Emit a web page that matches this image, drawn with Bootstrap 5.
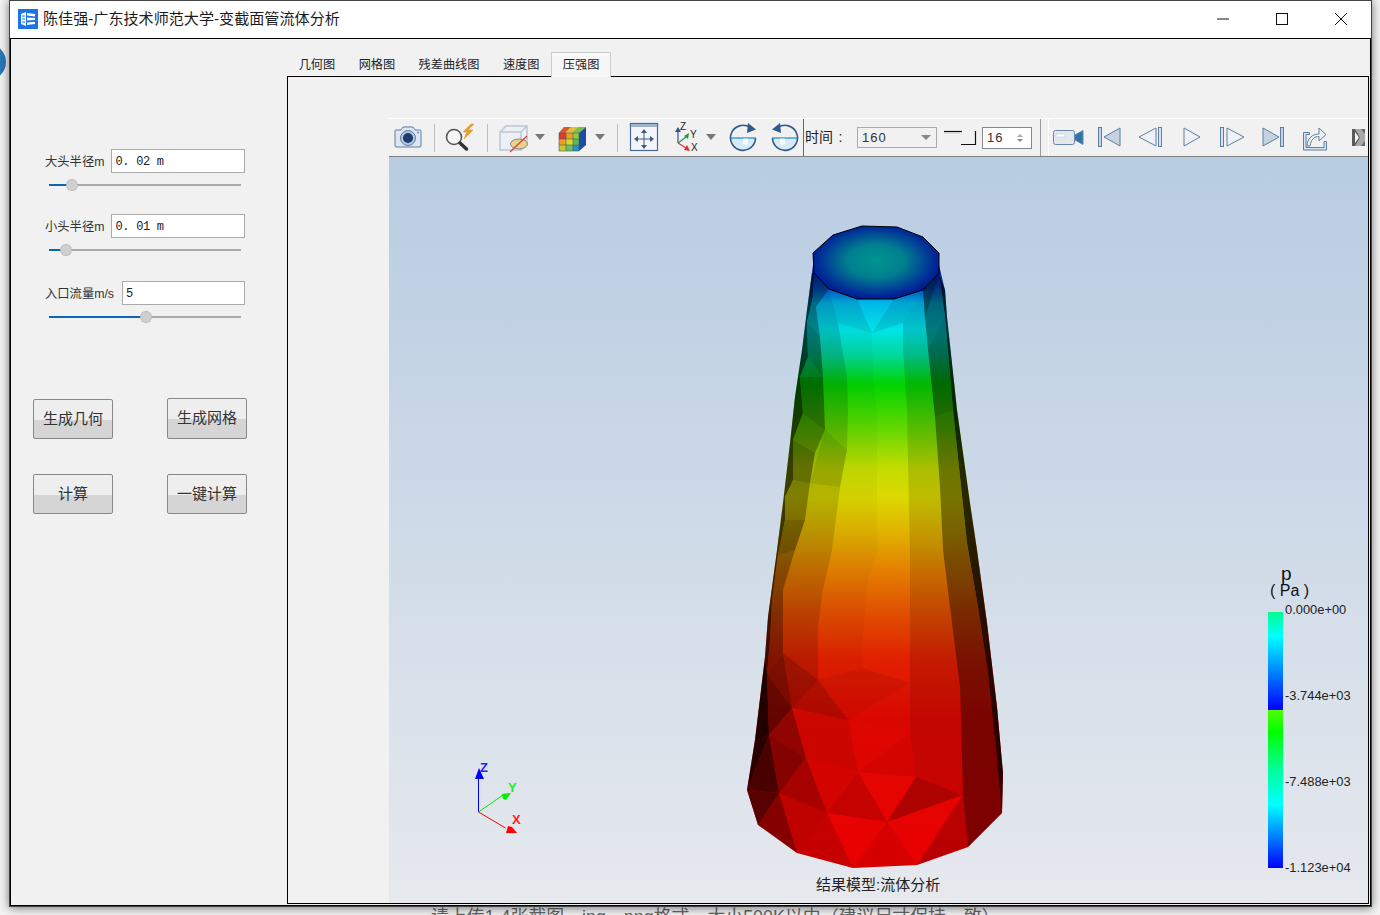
<!DOCTYPE html>
<html lang="zh-CN">
<head>
    <meta charset="UTF-8">
    <title>陈佳强-广东技术师范大学-变截面管流体分析</title>
    <meta name="viewport" content="width=device-width, initial-scale=1">
    <link href="https://cdn.jsdelivr.net/npm/bootstrap@5.3.0/dist/css/bootstrap.min.css" rel="stylesheet">
    <style>
        html, body { height: 915px; overflow: hidden; }
        body {
            background-color: #f3f3f3;
            font-family: "Liberation Sans", "Noto Sans CJK SC", sans-serif;
            color: #222;
        }
        /* page behind the window */
        .back-text {
            padding: 905px 0 0 431px;
            font-size: 17.9px;
            line-height: 24px;
            color: #666;
            white-space: nowrap;
        }
        .back-dot {
            position: absolute; left: -30px; top: 44px;
            width: 36px; height: 36px; border-radius: 50%;
            background: #2a78b8;
        }
        .win {
            position: absolute; left: 9px; top: 0;
            width: 1363px; height: 907px;
            border: 1px solid #444;
            background: #f1f1f1;
            box-shadow: 0 1px 9px rgba(0, 0, 0, .55);
        }
        .win-title { height: 38px; padding-bottom: 1px; background: #fff; border-bottom: 1px solid #000; }
        .win-name { font-size: 15.1px; color: #1c1c1c; margin-left: 5px; }
        .win-ctl { width: 59px; }
        .win-ctls { margin-right: 1px; }
        .win-body { height: 867px; border-left: 1px solid #000; border-right: 1px solid #000; border-bottom: 1px solid #000; }
        /* left panel */
        .side { width: 276px; padding: 110px 0 0 22px; }
        .fields { width: 212px; padding-left: 12px; }
        .field-row { gap: 7px; }
        .field-label { font-size: 12.3px; padding-top: 3px; color: #333; white-space: nowrap; }
        .field-wide { margin-left: 1px; }
        .field-input {
            height: 24px; padding: 2px 3px 0; border: 1px solid #aaa; border-radius: 0;
            font-family: "Liberation Mono", monospace; font-size: 12px; letter-spacing: -.3px; color: #222;
        }
        .field-gap1 { margin-bottom: 23px; }
        .field-gap2 { margin-bottom: 25px; }
        .slide {
            display: block; width: 192px; height: 12px; margin: 6px 0 0 4px; padding: 0;
        }
        .slide::-webkit-slider-runnable-track {
            height: 2px; border-radius: 0;
            background: linear-gradient(90deg, #0a66b8 var(--fill), #aaa var(--fill));
        }
        .slide::-webkit-slider-thumb {
            width: 12px; height: 12px; margin-top: -5px;
            background: #cfcfcf; border: 1px dotted #aaa; border-radius: 50%;
        }
        .btn-rows { width: 214px; }
        .btn-row1 { margin-top: 75px; }
        .btn-row2 { margin-top: 35px; }
        .win-btn {
            width: 80px; height: 40px; padding: 0;
            background: linear-gradient(#eeeeee 52%, #d5d5d5 52%);
            border: 1px solid #888; border-radius: 2px;
            font-size: 15px; color: #333;
        }
        .win-btn-tall { height: 41px; }
        /* tabs + frame */
        .main { padding-top: 13px; width: 1082px; }
        .main .nav-tabs { height: 24px; border-bottom: 0; }
        .main .nav-link {
            height: 25px; padding: 0 11.700px; margin: 0; border: 0; border-radius: 0;
            background: none; color: #222; font-size: 12.2px; line-height: 26px;
        }
        .main .nav-link.active {
            position: relative; z-index: 1; padding: 0 10.700px;
            background: #f7f7f7; border: 1px solid #ccc; border-bottom: 0; color: #222; line-height: 24px;
        }
        .frame { height: 828px; border: 1px solid #000; padding: 41px 0 0 101px; }
        .tools { height: 39px; border-top: 1px solid #fff; border-bottom: 1px solid #808080; padding-left: 5px; }
        .tools svg { display: block; flex: none; }
        .tool-sep { width: 1px; height: 28px; background: #bdbdbd; flex: none; }
        .tool-time { width: 237px; height: 37px; border-left: 1px solid #666; padding-left: 1px; font-size: 14px; }
        .time-label { width: 52px; white-space: nowrap; }
        .time-select {
            width: 80px; height: 21px; padding: 0 5px 0 4px; border: 1px solid #aaa;
            font-size: 13px; letter-spacing: 1px; color: #333;
        }
        .caret-down { width: 0; height: 0; border: 5px solid transparent; border-top: 5px solid #888; border-bottom: 0; }
        .time-spin {
            width: 50px; height: 22px; padding: 0 4px; background: #fff; border: 1px solid #888;
            font-size: 13px; letter-spacing: 1px; color: #333;
        }
        .spin-up, .spin-down { width: 0; height: 0; border: 3px solid transparent; }
        .spin-up { border-bottom: 3px solid #aaa; border-top: 0; margin-bottom: 2px; }
        .spin-down { border-top: 3px solid #888; border-bottom: 0; }
        .tool-end { height: 37px; border-left: 1px solid #999; padding-left: 7px; }
        .tool-play { border-left: 1px solid #fff; }
        .viewer { width: 979px; height: 746px; }
        .viewer svg { display: block; }
        .legend-text { font-size: 12.9px; fill: #222; }
    </style>
</head>
<body>
    <div class="back-dot"></div>
    <div class="back-text">请上传1-4张截图，jpg、png格式，大小500K以内（建议尺寸保持一致）</div>

    <div class="win">
        <!-- Title bar -->
        <div class="win-title d-flex align-items-center ps-2">
            <svg width="20" height="20" viewBox="0 0 20 20">
                <rect width="20" height="20" fill="#1a73e8"/>
                <path d="M3 5l5-2v14l-5-2z" fill="#fff"/>
                <path d="M9 4l8 1v2.4l-8-.9zM9 8.6l8 .5v2l-8 .4zM9 13.6l8-.9v2.4l-8 1z" fill="#fff"/>
                <path d="M4 7h3M4 10h3M4 13h3" stroke="#1a73e8"/>
            </svg>
            <span class="win-name flex-grow-1">陈佳强-广东技术师范大学-变截面管流体分析</span>
            <div class="d-flex win-ctls">
                <div class="win-ctl d-flex justify-content-center">
                    <svg width="12" height="12" viewBox="0 0 12 12"><path d="M0 6h12" stroke="#111"/></svg>
                </div>
                <div class="win-ctl d-flex justify-content-center">
                    <svg width="12" height="12" viewBox="0 0 12 12"><rect x=".5" y=".5" width="11" height="11" fill="none" stroke="#111"/></svg>
                </div>
                <div class="win-ctl d-flex justify-content-center">
                    <svg width="12" height="12" viewBox="0 0 12 12"><path d="M0 0l12 12M12 0L0 12" stroke="#111"/></svg>
                </div>
            </div>
        </div>

        <div class="win-body d-flex">
            <!-- Parameters -->
            <div class="side">
                <div class="fields">
                    <div class="field-gap1">
                        <div class="d-flex align-items-center field-row">
                            <label class="field-label">大头半径m</label>
                            <input class="form-control field-input" value="0. 02 m">
                        </div>
                        <input type="range" class="form-range slide" value="9.4" step="0.1" style="--fill:23px">
                    </div>
                    <div class="field-gap2">
                        <div class="d-flex align-items-center field-row">
                            <label class="field-label">小头半径m</label>
                            <input class="form-control field-input" value="0. 01 m">
                        </div>
                        <input type="range" class="form-range slide" value="6.1" step="0.1" style="--fill:17px">
                    </div>
                    <div>
                        <div class="d-flex align-items-center field-row">
                            <label class="field-label">入口流量m/s</label>
                            <input class="form-control field-input field-wide" value="5">
                        </div>
                        <input type="range" class="form-range slide" value="50.6" step="0.1" style="--fill:97px">
                    </div>
                </div>
                <div class="btn-rows">
                    <div class="btn-row1 d-flex justify-content-between align-items-end">
                        <button class="win-btn">生成几何</button>
                        <button class="win-btn win-btn-tall">生成网格</button>
                    </div>
                    <div class="btn-row2 d-flex justify-content-between">
                        <button class="win-btn">计算</button>
                        <button class="win-btn">一键计算</button>
                    </div>
                </div>
            </div>

            <div class="main">
                <ul class="nav nav-tabs">
                    <li class="nav-item"><a class="nav-link" href="#">几何图</a></li>
                    <li class="nav-item"><a class="nav-link" href="#">网格图</a></li>
                    <li class="nav-item"><a class="nav-link" href="#">残差曲线图</a></li>
                    <li class="nav-item"><a class="nav-link" href="#">速度图</a></li>
                    <li class="nav-item"><a class="nav-link active" href="#">压强图</a></li>
                </ul>
                <div class="frame">
                    <!-- Toolbar -->
                    <div class="tools d-flex align-items-center">
                        <svg width="40" height="37" viewBox="0 0 40 37">
                            <path d="M2 11h5l2-3h10l2 3h5a1 1 0 0 1 1 1v15a1 1 0 0 1-1 1H2a1 1 0 0 1-1-1V12a1 1 0 0 1 1-1z" fill="#dde6f1" stroke="#5d7ea8"/>
                            <circle cx="14" cy="19" r="7.500" fill="#b4c6dc" stroke="#5d7ea8"/>
                            <circle cx="14" cy="19" r="5" fill="#1d3b6e"/>
                            <circle cx="24" cy="13.500" r="1" fill="#6c8bb0"/>
                        </svg>
                        <div class="tool-sep"></div>
                        <svg width="52" height="37" viewBox="0 0 52 37">
                            <circle cx="19" cy="18" r="7.500" fill="#f6f6f6" stroke="#555" stroke-width="1.600"/>
                            <path d="M25 24l6.500 6" stroke="#333" stroke-width="3.500" stroke-linecap="round"/>
                            <path d="M36 5l-8 8h4l-3 7 9-9h-5l6-6z" fill="#e9a030" stroke="#d98a20" stroke-width=".5"/>
                        </svg>
                        <div class="tool-sep"></div>
                        <svg width="65" height="37" viewBox="0 0 65 37">
                            <path d="M12 13l6-6h21v18l-6 6H12z" fill="#eceff3" stroke="#bcc6d4" stroke-width="1.500"/>
                            <path d="M12 13h21v18M33 13l6-6" fill="none" stroke="#bcc6d4" stroke-width="1.500"/>
                            <ellipse cx="31" cy="25" rx="8.500" ry="5" fill="#e7d28c" stroke="#8a8a80"/>
                            <path d="M22 33l17-16" stroke="#cf4a2c" stroke-width="1.300"/>
                            <path d="M47 15h10l-5 6z" fill="#777"/>
                        </svg>
                        <svg width="64" height="37" viewBox="0 0 64 37">
                            <path d="M11 8h22l-6 6H6z" fill="#7cc04a"/>
                            <path d="M11 8h7l-6 6H6z" fill="#e2552c"/>
                            <path d="M18 8h7l-6 6h-7z" fill="#e0c030"/>
                            <path d="M26 14l7-6v18l-7 6z" fill="#1f4aa0"/>
                            <rect x="6" y="14" width="7" height="6" fill="#e5392c"/>
                            <rect x="13" y="14" width="7" height="6" fill="#e8a31f"/>
                            <rect x="20" y="14" width="6" height="6" fill="#8fce3a"/>
                            <rect x="6" y="20" width="7" height="6" fill="#e9a020"/>
                            <rect x="13" y="20" width="7" height="6" fill="#d9d92a"/>
                            <rect x="20" y="20" width="6" height="6" fill="#56bc58"/>
                            <rect x="6" y="26" width="7" height="6" fill="#c8c830"/>
                            <rect x="13" y="26" width="7" height="6" fill="#68c060"/>
                            <rect x="20" y="26" width="6" height="6" fill="#2f90c8"/>
                            <path d="M6 14h20v18H6zM13 14v18M20 14v18M6 20h20M6 26h20" fill="none" stroke="#4a5a70" stroke-width=".6"/>
                            <path d="M42 15h10l-5 6z" fill="#777"/>
                        </svg>
                        <div class="tool-sep"></div>
                        <svg width="50" height="37" viewBox="0 0 50 37">
                            <rect x="12.500" y="4.500" width="27" height="27" fill="#f3f5f8" stroke="#4a6a96" stroke-width="1.200"/>
                            <rect x="13" y="5" width="26" height="3" fill="#9fb4cf"/>
                            <path d="M26 13v14M19 20h14" stroke="#3c5a86"/>
                            <path d="M26 10l3 4h-6zM26 30l3-4h-6zM16 20l4-3v6zM36 20l-4-3v6z" fill="#3c5a86"/>
                        </svg>
                        <svg width="56" height="37" viewBox="0 0 56 37">
                            <path d="M10 24V12" stroke="#2f52a8" stroke-width="1.200"/>
                            <path d="M10 8l3 5H7z" fill="#2f52a8"/>
                            <path d="M10 24l8-6" stroke="#1f9a4a" stroke-width="1.200"/>
                            <path d="M21 14l-1 6-4-3z" fill="#1f9a4a"/>
                            <path d="M10 24l8 5" stroke="#e23030" stroke-width="1.200"/>
                            <path d="M22 32l-6-1 3-5z" fill="#e23030"/>
                            <text x="12" y="11" font-size="10" fill="#222">Z</text>
                            <text x="22" y="19" font-size="10" fill="#222">Y</text>
                            <text x="23" y="32" font-size="10" fill="#222">X</text>
                            <path d="M38 15h10l-5 6z" fill="#777"/>
                        </svg>
                        <svg width="42" height="37" viewBox="0 0 42 37">
                            <path d="M7.500 19h24a12 12 0 0 1-24 0z" fill="#d6eaf7"/>
                            <path d="M31.500 19A12.500 12.500 0 1 1 26 8.500" fill="none" stroke="#2f5a8c" stroke-width="1.600"/>
                            <path d="M24 4l8 6.500-9 3.500z" fill="#2f5a8c"/>
                            <path d="M7 19h25" stroke="#1f86d0" stroke-width="1.200"/>
                            <path d="M19 19.500h5v6h-5z" fill="#fff" opacity=".75"/>
                        </svg>
                        <svg width="37" height="37" viewBox="0 0 37 37">
                            <g transform="translate(38 0) scale(-1 1)">
                                <path d="M7.500 19h24a12 12 0 0 1-24 0z" fill="#d6eaf7"/>
                                <path d="M31.500 19A12.500 12.500 0 1 1 26 8.500" fill="none" stroke="#2f5a8c" stroke-width="1.600"/>
                                <path d="M24 4l8 6.500-9 3.500z" fill="#2f5a8c"/>
                                <path d="M7 19h25" stroke="#1f86d0" stroke-width="1.200"/>
                                <path d="M19 19.500h5v6h-5z" fill="#fff" opacity=".75"/>
                            </g>
                        </svg>

                        <div class="tool-time d-flex align-items-center">
                            <span class="time-label">时间&thinsp;&thinsp;:</span>
                            <div class="time-select d-flex align-items-center justify-content-between">
                                <span>160</span><span class="caret-down"></span>
                            </div>
                            <svg width="45" height="37" viewBox="0 0 45 37">
                                <path d="M7 12.500h18" stroke="#111" stroke-width="1.200"/>
                                <path d="M7 14h17" stroke="#ccc"/>
                                <path d="M38.500 12v13.500H24" fill="none" stroke="#111" stroke-width="1.200"/>
                            </svg>
                            <div class="time-spin d-flex align-items-center justify-content-between">
                                <span>16</span>
                                <div class="d-flex flex-column align-items-center me-1">
                                    <span class="spin-up"></span><span class="spin-down"></span>
                                </div>
                            </div>
                        </div>

                        <div class="tool-end"></div>
                        <div class="tool-play d-flex align-items-center">
                            <svg width="42" height="37" viewBox="0 0 42 37">
                                <rect x="4.500" y="11.500" width="21" height="14" rx="2" fill="#e3e7ed" stroke="#6c86a8"/>
                                <rect x="7" y="15" width="9" height="3" fill="#fff" stroke="#b7c2d0" stroke-width=".5"/>
                                <path d="M26 16l8-4.500v14l-8-4.500z" fill="#2f74ad" stroke="#6c86a8"/>
                            </svg>
                            <svg width="40" height="37" viewBox="0 0 40 37">
                                <rect x="7.500" y="8.500" width="3" height="19" fill="#c5d2e2" stroke="#5f7ea5"/>
                                <path d="M29 9v18l-16-9z" fill="#c5d2e2" stroke="#5f7ea5" stroke-linejoin="round"/>
                            </svg>
                            <svg width="43" height="37" viewBox="0 0 43 37">
                                <path d="M25 9v18L8 18z" fill="#eef2f7" stroke="#5f7ea5" stroke-linejoin="round"/>
                                <rect x="27.500" y="8.500" width="3" height="19" fill="#dbe3ee" stroke="#5f7ea5"/>
                            </svg>
                            <svg width="38" height="37" viewBox="0 0 38 37">
                                <path d="M10 9v18l16-9z" fill="#eef2f7" stroke="#5f7ea5" stroke-linejoin="round"/>
                            </svg>
                            <svg width="42" height="37" viewBox="0 0 42 37">
                                <rect x="8.500" y="8.500" width="3" height="19" fill="#dbe3ee" stroke="#5f7ea5"/>
                                <path d="M15 9v18l17-9z" fill="#eef2f7" stroke="#5f7ea5" stroke-linejoin="round"/>
                            </svg>
                            <svg width="42" height="37" viewBox="0 0 42 37">
                                <path d="M9 9v18l16-9z" fill="#c5d2e2" stroke="#5f7ea5" stroke-linejoin="round"/>
                                <rect x="26.500" y="8.500" width="3" height="19" fill="#c5d2e2" stroke="#5f7ea5"/>
                            </svg>
                            <svg width="50" height="37" viewBox="0 0 50 37">
                                <path d="M7.500 13.500h6v2h-3.500v13h18v-6h2.500v8.500h-23z" fill="#dbe4ef" stroke="#5f7ea5" stroke-linejoin="round"/>
                                <path d="M11 27c0-7 5-12 12-12V9l7 6.500-7 6.500v-4.500c-5 0-8 3-9 9.500z" fill="#eef2f7" stroke="#5f7ea5" stroke-linejoin="round"/>
                            </svg>
                            <svg width="21" height="37" viewBox="0 0 21 37">
                                <rect x="6" y="10" width="13" height="17" fill="#a8a8a8"/>
                                <path d="M6 10h3l5 8.500-5 8.500H6z" fill="#5a5a5a"/>
                                <path d="M9 13l4 5.500-4 5.500z" fill="#f4f4f4"/>
                                <path d="M15 10h4v5zM15 27h4v-5z" fill="#666"/>
                            </svg>
                        </div>
                    </div>

                    <!-- 3D view -->
                    <div class="viewer">
                        <svg width="979" height="746" viewBox="389 157 979 746">
                            <defs>
                                <linearGradient id="sky" x1="0" y1="0" x2="0" y2="1">
                                    <stop offset="0" stop-color="#b8cce2"/>
                                    <stop offset="1" stop-color="#e6e9ee"/>
                                </linearGradient>
                                <linearGradient id="pres" gradientUnits="userSpaceOnUse" x1="0" y1="270" x2="0" y2="870">
                                    <stop offset="0" stop-color="#0020c0"/>
                                    <stop offset=".03" stop-color="#0058e0"/>
                                    <stop offset=".055" stop-color="#00b8e8"/>
                                    <stop offset=".1" stop-color="#00e4e8"/>
                                    <stop offset=".14" stop-color="#00d8a0"/>
                                    <stop offset=".19" stop-color="#00d400"/>
                                    <stop offset=".27" stop-color="#6cd800"/>
                                    <stop offset=".33" stop-color="#c4dc00"/>
                                    <stop offset=".38" stop-color="#dcd800"/>
                                    <stop offset=".44" stop-color="#e0b000"/>
                                    <stop offset=".5" stop-color="#e48000"/>
                                    <stop offset=".57" stop-color="#e05000"/>
                                    <stop offset=".65" stop-color="#e02000"/>
                                    <stop offset=".75" stop-color="#e20800"/>
                                    <stop offset="1" stop-color="#e80000"/>
                                </linearGradient>
                                <radialGradient id="cap" cx=".5" cy=".48" r=".56">
                                    <stop offset="0" stop-color="#009490"/>
                                    <stop offset=".4" stop-color="#00808f"/>
                                    <stop offset=".8" stop-color="#003098"/>
                                    <stop offset="1" stop-color="#00108c"/>
                                </radialGradient>
                                <linearGradient id="bar1" x1="0" y1="0" x2="0" y2="1">
                                    <stop offset="0" stop-color="#00ff90"/>
                                    <stop offset=".25" stop-color="#00ffff"/>
                                    <stop offset=".62" stop-color="#0080ff"/>
                                    <stop offset="1" stop-color="#0000ff"/>
                                </linearGradient>
                                <linearGradient id="bar2" x1="0" y1="0" x2="0" y2="1">
                                    <stop offset="0" stop-color="#50ff00"/>
                                    <stop offset=".14" stop-color="#00ff00"/>
                                    <stop offset=".36" stop-color="#00ff90"/>
                                    <stop offset=".6" stop-color="#00ffff"/>
                                    <stop offset=".8" stop-color="#0080ff"/>
                                    <stop offset="1" stop-color="#0000ff"/>
                                </linearGradient>
                            </defs>
                            <rect x="389" y="157" width="979" height="746" fill="url(#sky)"/>

                            <!-- pipe body, coloured by pressure -->
                            <polygon fill="url(#pres)" points="813,265 807,310 802,350 795,397 790,443 783,503 777,550 768,617 765,657 755,740 747,790 758,825 797,853 853,868 917,865 968,847 1002,813 1003,773 997,707 987,623 977,550 970,503 957,410 947,317 945,290 939,265"/>

                            <!-- long strips down the side, darker to the edges -->
                            <g fill="#000">
                                <polygon fill-opacity=".72" points="812,273 807,310 802,350 795,397 790,443 783,503 777,550 768,617 765,657 767,673 770,640 772,600 778,555 785,520 785,497 793,480 793,440 803,413 800,377 808,357 807,322 813,297 814,273"/>
                                <polygon fill-opacity=".42" points="814,273 813,297 807,322 808,357 800,377 803,413 793,440 793,480 785,497 785,520 778,555 772,600 770,640 767,673 783,653 783,590 795,550 805,520 810,483 815,453 825,430 823,377 820,337 816,307 829,289"/>
                                <polygon fill-opacity=".17" points="816,307 820,337 823,377 825,430 815,453 810,483 805,520 795,550 783,590 783,653 818,680 818,627 823,590 832,550 840,487 847,450 848,410 847,377 838,323 829,289"/>
                                <polygon fill-opacity=".03" points="838,323 847,377 848,410 847,450 840,487 832,550 823,590 818,627 818,680 863,668 863,633 868,580 878,550 877,510 877,467 877,410 873,377 872,333"/>
                                <polygon fill-opacity=".13" points="903,323 903,350 907,410 908,463 910,550 910,733 916,777 963,795 960,687 950,607 943,550 940,487 935,417 928,350 925,318 923,290"/>
                                <polygon fill-opacity=".46" points="923,290 925,318 928,350 935,417 940,487 943,550 950,607 960,687 963,795 968,847 1002,813 995,740 988,673 978,607 967,543 953,410 945,317 939,273"/>
                                <polygon fill-opacity=".82" points="939,273 945,317 953,410 967,543 978,607 988,673 995,740 1002,813 1003,773 997,707 987,623 977,550 970,503 957,410 947,317 945,290"/>

                                <!-- facets near the top -->
                                <polygon fill-opacity=".1" points="829,289 857,299 872,333 838,323"/>
                                <polygon fill-opacity=".1" points="894,299 923,290 903,323 872,333"/>
                                <polygon fill-opacity=".22" points="923,290 925,318 939,273"/>
                                <polygon fill-opacity=".12" points="793,440 815,453 810,483 793,480"/>
                                <polygon fill-opacity=".1" points="800,377 823,377 825,430 803,413"/>
                                <polygon fill-opacity=".08" points="825,430 847,450 840,487 810,483"/>
                                <polygon fill-opacity=".12" points="785,520 805,520 795,550 778,555"/>
                                <polygon fill-opacity=".1" points="807,322 820,337 823,377 808,357"/>
                                <polygon fill-opacity=".08" points="928,350 945,317 953,410 935,417"/>

                                <!-- triangles at the wide end -->
                                <polygon fill-opacity=".08" points="818,680 863,668 910,683 848,720"/>
                                <polygon fill-opacity=".03" points="848,720 910,683 910,733"/>
                                <polygon fill-opacity=".02" points="848,720 910,733 858,772"/>
                                <polygon fill-opacity=".07" points="858,772 910,733 916,777"/>
                                <polygon fill-opacity=".14" points="827,813 858,772 887,822"/>
                                <polygon fill-opacity=".07" points="806,758 858,772 827,813"/>
                                <polygon fill-opacity=".1" points="792,708 848,720 858,772 806,758"/>
                                <polygon fill-opacity=".22" points="792,708 818,680 848,720"/>
                                <polygon fill-opacity=".3" points="783,653 818,680 792,708"/>
                                <polygon fill-opacity=".07" points="887,822 917,865 853,868"/>
                                <polygon fill-opacity=".14" points="797,853 827,813 853,868"/>
                                <polygon fill-opacity=".17" points="779,793 827,813 797,853"/>
                                <polygon fill-opacity=".27" points="779,793 806,758 827,813"/>
                                <polygon fill-opacity=".42" points="769,735 806,758 779,793"/>
                                <polygon fill-opacity=".36" points="769,735 792,708 806,758"/>
                                <polygon fill-opacity=".42" points="758,825 779,793 797,853"/>
                                <polygon fill-opacity=".62" points="747,790 779,793 758,825"/>
                                <polygon fill-opacity=".68" points="747,790 769,735 779,793"/>
                                <polygon fill-opacity=".82" points="755,740 769,735 747,790"/>
                                <polygon fill-opacity=".55" points="767,673 792,708 769,735"/>
                                <polygon fill-opacity=".45" points="783,653 792,708 767,673"/>
                                <polygon fill-opacity=".85" points="765,657 767,673 769,735 755,740"/>
                                <polygon fill-opacity=".24" points="916,777 963,795 887,822"/>
                                <polygon fill-opacity=".2" points="917,865 963,795 968,847"/>
                            </g>

                            <!-- inlet cap -->
                            <polygon fill="url(#cap)" stroke="#000" points="813,253 833,235 862,226 897,227 923,237 939,253 939,273 923,290 894,299 857,299 829,289 814,273"/>

                            <!-- orientation axes -->
                            <path d="M478.500 812V776" stroke="#0000ff"/>
                            <path d="M479 768l5 11h-9z" fill="#0000ff"/>
                            <path d="M478.500 812l26-18" stroke="#00e800"/>
                            <path d="M502 794l9-1-5 7-3-1z" fill="#00ee00"/>
                            <path d="M478.500 812l27 16" stroke="#ff0000"/>
                            <path d="M508 826l4 1 5 6h-11z" fill="#ff0000"/>
                            <text x="480" y="772" font-size="13" font-weight="700" fill="#2222ff">Z</text>
                            <text x="508" y="792" font-size="13" font-weight="700" fill="#22ee22">Y</text>
                            <text x="512" y="824" font-size="13" font-weight="700" fill="#ff2222">X</text>

                            <!-- colour bar -->
                            <rect x="1268" y="612" width="15" height="98" fill="url(#bar1)"/>
                            <rect x="1268" y="710" width="15" height="158" fill="url(#bar2)"/>
                            <text x="1281" y="580" font-size="19" fill="#111">p</text>
                            <text x="1270" y="596" font-size="16" fill="#111">( Pa )</text>
                            <text class="legend-text" x="1285" y="614">0.000e+00</text>
                            <text class="legend-text" x="1285" y="700">-3.744e+03</text>
                            <text class="legend-text" x="1285" y="786">-7.488e+03</text>
                            <text class="legend-text" x="1285" y="872">-1.123e+04</text>

                            <text x="816" y="890" font-size="15" fill="#222">结果模型:流体分析</text>
                        </svg>
                    </div>
                </div>
            </div>
        </div>
    </div>

    <script src="https://cdn.jsdelivr.net/npm/bootstrap@5.3.0/dist/js/bootstrap.bundle.min.js"></script>
</body>
</html>
